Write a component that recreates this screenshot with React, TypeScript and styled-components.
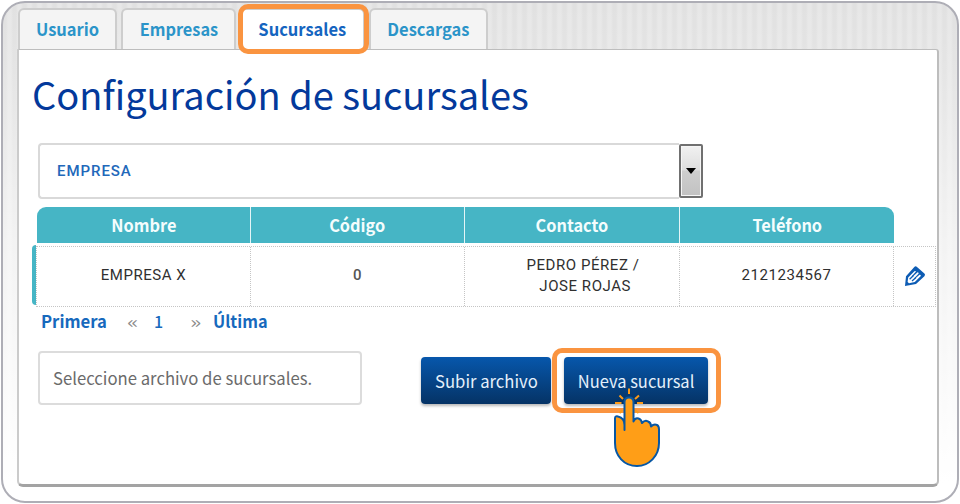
import React from 'react';
import styled, { createGlobalStyle } from 'styled-components';

const GlobalStyle = createGlobalStyle`
  *, *::before, *::after { box-sizing: border-box; }
  body { margin: 0; background: #fff; overflow: hidden; }
`;

const humanist = `'Noto Sans CJK SC', 'Noto Sans', sans-serif`;
const roboto = `Roboto, 'Noto Sans', sans-serif`;

const Page = styled.div`
  width: 960px;
  height: 504px;
  padding: 1px;
  background: #fff;
`;

const Frame = styled.main`
  width: 958px;
  height: 502px;
  padding: 5px 18px 0 15px;
  border: 2px solid #aeaeb6;
  border-radius: 24px;
  background:
    linear-gradient(180deg, rgba(255, 255, 255, 0) 0, rgba(255, 255, 255, 0.12) 60px, rgba(255, 255, 255, 0.6) 240px, #fff 480px),
    repeating-linear-gradient(90deg, #e1e1e1 0 3px, #e7e7e7 5px 8px, #e1e1e1 10px);
`;

const Tabs = styled.nav`
  display: flex;
  gap: 4px;
  height: 41px;
`;

const Tab = styled.div<{ $width: number; $active?: boolean }>`
  position: relative;
  display: flex;
  align-items: center;
  justify-content: center;
  width: ${(p) => p.$width}px;
  height: 41px;
  padding-bottom: 1px;
  border: 2px solid #cdcdcd;
  border-bottom-width: 0;
  border-radius: 6px 6px 0 0;
  background: ${(p) => (p.$active ? '#fff' : '#f4f4f4')};
  color: ${(p) => (p.$active ? '#1565c0' : '#2b94c9')};
`;

const Text = styled.span<{ $size: number; $weight?: number; $x?: number }>`
  display: block;
  font-family: ${humanist};
  font-size: ${(p) => p.$size}px;
  font-weight: ${(p) => p.$weight ?? 700};
  line-height: 24px;
  white-space: nowrap;
  transform: scaleX(${(p) => p.$x ?? 1});
`;

const Highlight = styled.span<{ $inset: string }>`
  position: absolute;
  inset: ${(p) => p.$inset};
  border: 5px solid #fa9440;
  border-radius: 10px;
  z-index: 2;
  pointer-events: none;
`;

const Panel = styled.section`
  width: 922px;
  height: 438px;
  margin-left: -1px;
  padding: 19px 0 0 13px;
  border: 2px solid #bdbdbd;
  border-top: 1px solid #bdbdbd;
  border-left-color: #cbcbcb;
  border-bottom: 3px solid #a3a3a3;
  border-radius: 0 3px 6px 6px;
  background: #fff;
`;

const Title = styled.h1`
  height: 50px;
  margin: 0;
  color: #03399b;
  font-family: ${humanist};
  font-size: 38px;
  font-weight: 400;
  line-height: 50px;
  letter-spacing: -0.02px;
  white-space: nowrap;
`;

const SelectBox = styled.div`
  display: flex;
  width: 665px;
  height: 56px;
  margin: 24px 0 0 6px;
  padding: 1px 0;
`;

const SelectValue = styled.div`
  display: flex;
  align-items: center;
  flex: 1;
  padding-left: 17px;
  border: 2px solid #d9d9d9;
  border-right: 0;
  border-radius: 4px 0 0 4px;
  margin: -1px 0;
  color: #2268ba;
  font: 500 15px/20px ${roboto};
  letter-spacing: 0.95px;
`;

const SelectArrow = styled.div`
  display: flex;
  align-items: center;
  justify-content: center;
  width: 24px;
  border: 2px solid #707070;
  border-radius: 2px;
  background: linear-gradient(#f1f1f1 0, #dedede 48%, #cecece 50%, #c2c2c2 100%);
  box-shadow: inset 0 0 0 1px #f5f5f5;
`;

const TableHead = styled.div`
  display: grid;
  grid-template-columns: 214px 214px 215px 214px;
  width: 857px;
  height: 36px;
  margin: 8px 0 0 5px;
  border-radius: 9px 9px 0 0;
  background: #46b5c5;
  color: #f4fdfd;
`;

const HeadCell = styled.div`
  display: flex;
  align-items: center;
  justify-content: center;
  border-right: 1px solid #e4f5f7;
  &:last-child { border-right: 0; }
`;

const RowWrap = styled.div`
  display: flex;
  width: 904px;
  height: 62px;
  margin-top: 2px;
`;

const RowMarker = styled.div`
  width: 4px;
  height: 60px;
  border-radius: 4px 0 0 4px;
  background: #46b5c5;
`;

const Row = styled.div`
  display: grid;
  grid-template-columns: 214px 214px 215px 214px 41px;
  height: 61px;
  margin-top: 1px;
  border: 1px dotted #c5c5c5;
`;

const Cell = styled.div<{ $indent?: number; $bold?: boolean }>`
  display: flex;
  align-items: center;
  justify-content: center;
  padding: 0 0 2px ${(p) => p.$indent ?? 0}px;
  border-right: 1px dotted #c5c5c5;
  color: ${(p) => (p.$bold ? '#555' : '#303030')};
  font: ${(p) => (p.$bold ? 500 : 400)} 15px/21px ${roboto};
  letter-spacing: 0.55px;
  white-space: pre;
  &:last-child { border-right: 0; }
`;

const Pager = styled.div`
  display: flex;
  align-items: center;
  height: 24px;
  margin: 2px 0 0 9px;
  color: #1769bd;
`;

const PagerItem = styled.div<{ $width: number; $muted?: boolean }>`
  width: ${(p) => p.$width}px;
  color: ${(p) => (p.$muted ? '#8c8c8c' : 'inherit')};
  & > span { transform-origin: left center; }
`;

const Actions = styled.div`
  display: flex;
  margin: 18px 0 0 6px;
`;

const FileInput = styled.div`
  display: flex;
  align-items: center;
  width: 324px;
  height: 54px;
  padding-left: 13px;
  border: 2px solid #dcdcdc;
  border-radius: 4px;
  color: #6b6b6b;
  & > span { transform-origin: left center; }
`;

const Button = styled.div<{ $width: number; $gap: number }>`
  position: relative;
  display: flex;
  align-items: center;
  justify-content: center;
  width: ${(p) => p.$width}px;
  height: 47px;
  margin: 6px 0 0 ${(p) => p.$gap}px;
  border-radius: 4px;
  background: linear-gradient(#0757ac, #053365);
  box-shadow: 0 2px 3px rgba(0, 0, 0, 0.28);
  color: #e4f0fb;
`;

const Pointer = styled.svg`
  position: absolute;
  left: 49px;
  top: 30px;
  z-index: 3;
`;

const EditIcon = () => (
  <svg width="22" height="22" viewBox="0 0 22 22">
    <path d="M1 21 2 11.3 10.3 2Q11.6 .6 13 1.9L20.4 8.6Q21.7 9.9 20.4 11.2L12 19Z" fill="#0d5cb4" />
    <path
      d="M4.2 12.4 10.4 6.2Q11.4 5.5 12 6.4L7.7 11.2 8.4 11.9 13.3 7.4Q14.4 7.2 14.7 8.5L10 13.4 10.7 14 15.5 9.8Q17 9.6 16.8 11L10.8 17 5 18.2 3.6 17Z"
      fill="#fff"
    />
    <path d="M5.6 14.3 9.5 10.5M8 16 12 12.4" stroke="#0d5cb4" strokeWidth="1.3" />
  </svg>
);

const HandPointer = () => (
  <Pointer width="50" height="82" viewBox="0 0 50 82">
    <path
      d="M6.5 8.5 10 12M16 1.5V7M26 8.5 22 12M2 16H8.5M24 16H30M6.5 26 9.5 23M25.5 26 22 23"
      stroke="#fc9a18"
      strokeWidth="2"
    />
    <path
      d="M11.5 43V15Q11.5 10.5 16 10.5T20.5 15V34.5Q22 30.5 25.5 31.5 28.5 32.5 29 36 32 32.5 35 34.5 38 35.5 38 39.5 41 36.5 44 38 46 39 46 42.5V56C46 69 36 79 24 79 11 79 2 69 2 56V31.5Q2 28.5 5 29.5 11.5 31 11.5 38Z"
      fill="#ff9e17"
      stroke="#0757a4"
      strokeWidth="2"
      strokeLinejoin="round"
    />
  </Pointer>
);

export default function App() {
  return (
    <>
      <GlobalStyle />
      <Page>
        <Frame>
          <Tabs>
            <Tab $width={99}><Text $size={17} $x={0.97}>Usuario</Text></Tab>
            <Tab $width={115}><Text $size={17} $x={0.96}>Empresas</Text></Tab>
            <Tab $width={125} $active>
              <Text $size={17} $x={0.97}>Sucursales</Text>
              <Highlight $inset="-6px -6px -5px -4px" />
            </Tab>
            <Tab $width={119}><Text $size={17} $x={0.97}>Descargas</Text></Tab>
          </Tabs>
          <Panel>
            <Title>Configuración de sucursales</Title>
            <SelectBox>
              <SelectValue>EMPRESA</SelectValue>
              <SelectArrow>
                <svg width="10" height="6" viewBox="0 0 10 6"><path d="M0 0H10L5 6Z" /></svg>
              </SelectArrow>
            </SelectBox>
            <TableHead>
              {['Nombre', 'Código', 'Contacto', 'Teléfono'].map((label) => (
                <HeadCell key={label}><Text $size={17} $x={0.96}>{label}</Text></HeadCell>
              ))}
            </TableHead>
            <RowWrap>
              <RowMarker />
              <Row>
                <Cell>EMPRESA X</Cell>
                <Cell $bold>0</Cell>
                <Cell $indent={22}>{'PEDRO PÉREZ /\n   JOSE ROJAS'}</Cell>
                <Cell>2121234567</Cell>
                <Cell><EditIcon /></Cell>
              </Row>
            </RowWrap>
            <Pager>
              <PagerItem $width={86}><Text $size={17} $x={0.98}>Primera</Text></PagerItem>
              <PagerItem $width={27} $muted><Text $size={17} $weight={400} $x={1.4}>«</Text></PagerItem>
              <PagerItem $width={36}><Text $size={16} $weight={500}>1</Text></PagerItem>
              <PagerItem $width={23} $muted><Text $size={17} $weight={400} $x={1.4}>»</Text></PagerItem>
              <PagerItem $width={70}><Text $size={17} $x={0.96}>Última</Text></PagerItem>
            </Pager>
            <Actions>
              <FileInput><Text $size={17} $weight={400} $x={0.982}>Seleccione archivo de sucursales.</Text></FileInput>
              <Button $width={130} $gap={59}><Text $size={17} $weight={400} $x={0.98}>Subir archivo</Text></Button>
              <Button $width={144} $gap={13}>
                <Text $size={17} $weight={400} $x={0.97}>Nueva sucursal</Text>
                <Highlight $inset="-9px -13px -9px -12px" />
                <HandPointer />
              </Button>
            </Actions>
          </Panel>
        </Frame>
      </Page>
    </>
  );
}
